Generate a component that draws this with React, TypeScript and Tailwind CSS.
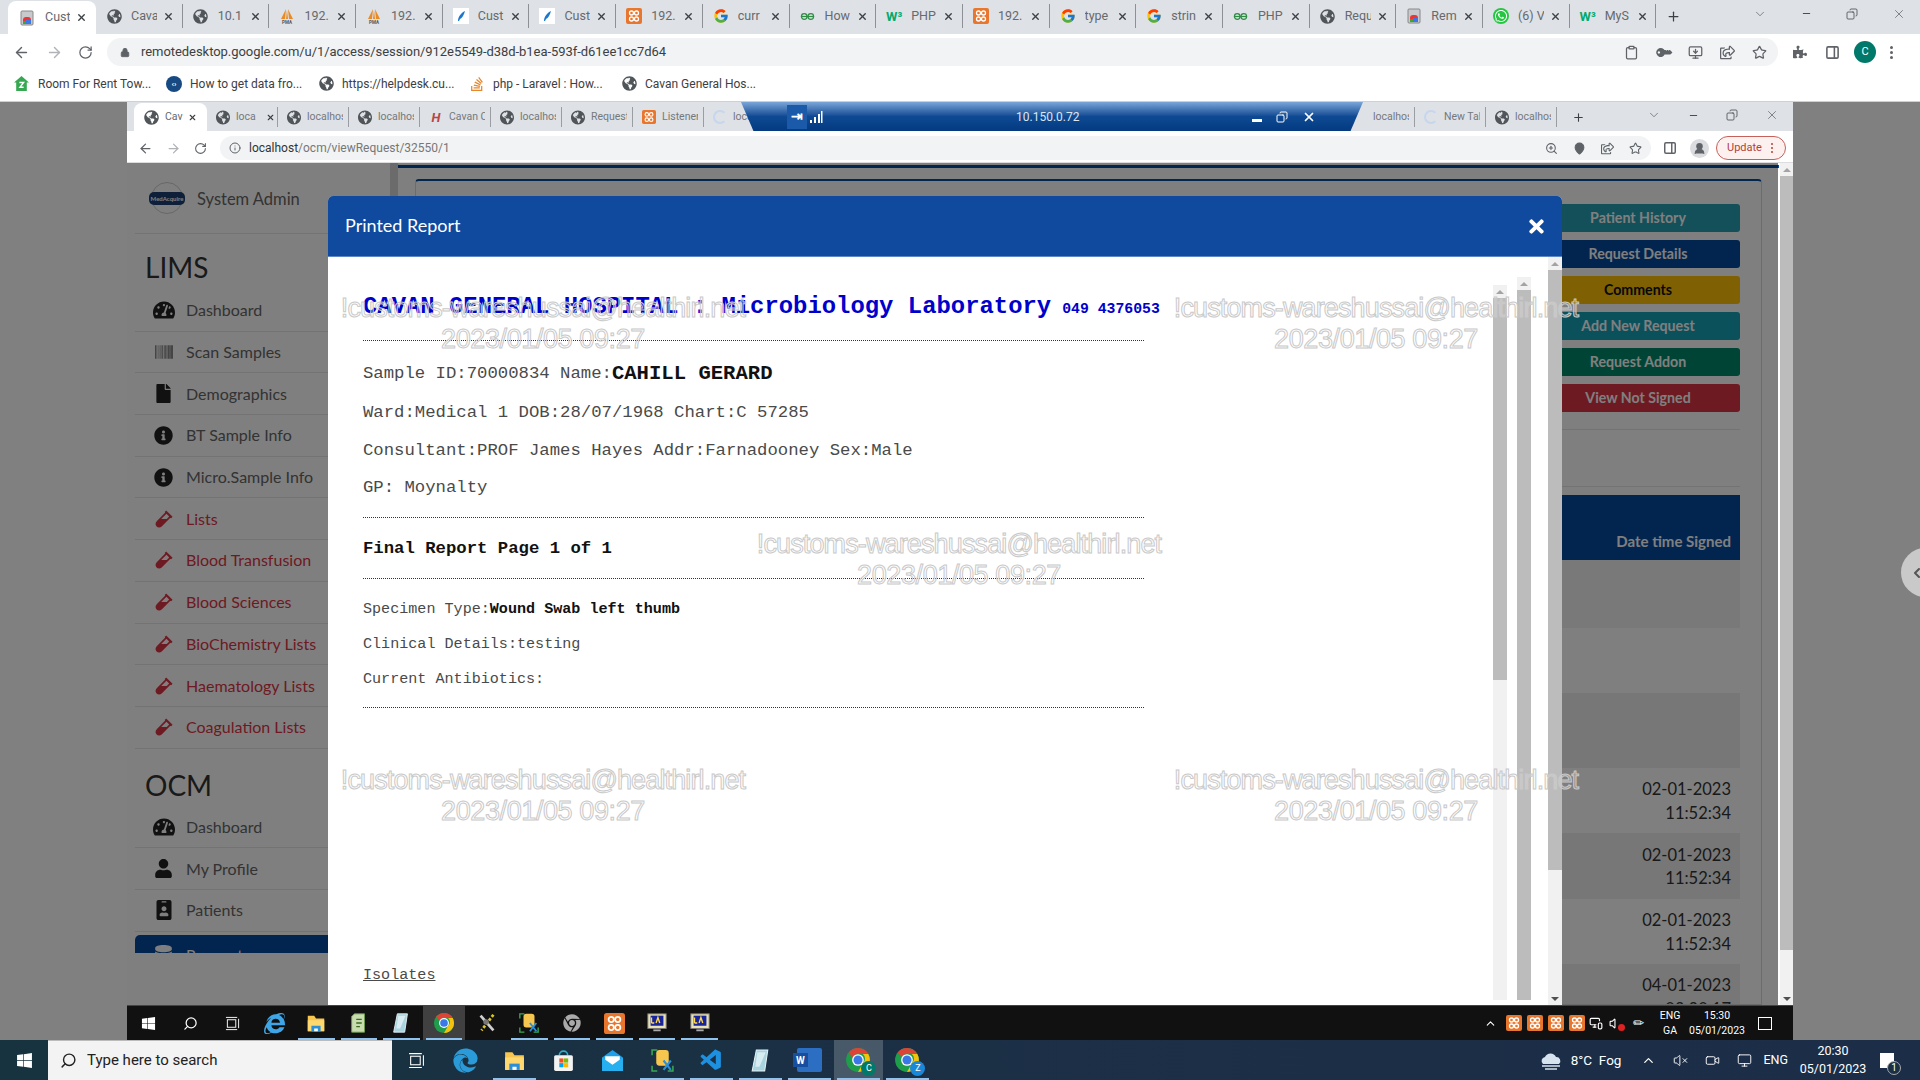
import type { ReactNode } from 'react'
import {
  FaBarcode,
  FaChrome,
  FaDatabase,
  FaEdge,
  FaFile,
  FaGlobeAmericas,
  FaIdBadge,
  FaInfoCircle,
  FaInternetExplorer,
  FaKey,
  FaPuzzlePiece,
  FaRegShareSquare,
  FaStackOverflow,
  FaTachometerAlt,
  FaTimes,
  FaUser,
  FaVial,
  FaWhatsapp,
  FaWindows,
} from 'react-icons/fa'
import { FcGoogle } from 'react-icons/fc'
import { VscVscode } from 'react-icons/vsc'
import {
  ArrowLeft,
  ArrowRight,
  ChevronDown,
  ChevronLeft,
  ChevronUp,
  Clipboard,
  Copy,
  Info,
  Lock,
  MapPin,
  Minus,
  Monitor as MonitorLine,
  MonitorDown,
  MonitorSmartphone,
  PanelRight,
  Plus,
  RotateCw,
  Search,
  Star,
  UserRound,
  Video,
  Volume,
  VolumeX,
  X,
  ZoomIn,
} from 'lucide-react'

const uiFont = "font-['Roboto',sans-serif]"
const pageFont = "font-['Lato','Noto_Sans',sans-serif]"
const monoFont = "font-['Liberation_Mono',monospace]"

function ChromeLogo({ size = 22 }: { size?: number }) {
  return (
    <svg width={size} height={size} viewBox="0 0 24 24">
      <circle cx="12" cy="12" r="11" fill="#1e9e4a" />
      <path d="M12 1a11 11 0 0 1 9.5 5.5H12a5.5 5.5 0 0 0-4.9 3L3.4 5.2A11 11 0 0 1 12 1z" fill="#db4437" />
      <path d="M21.5 6.5A11 11 0 0 1 12 23l4.7-8.2a5.5 5.5 0 0 0-.2-8.3z" fill="#f4c20d" />
      <circle cx="12" cy="12" r="5.4" fill="#fff" />
      <circle cx="12" cy="12" r="4.2" fill="#3b78e7" />
    </svg>
  )
}

function Xampp({ size = 16 }: { size?: number }) {
  return (
    <svg width={size} height={size} viewBox="0 0 16 16">
      <rect width="16" height="16" rx="2" fill="#e8762d" />
      <g fill="none" stroke="#fff" strokeWidth="1.300">
        <circle cx="5.500" cy="5" r="2" />
        <circle cx="10.500" cy="5" r="2" />
        <circle cx="5.500" cy="11" r="2" />
        <circle cx="10.500" cy="11" r="2" />
      </g>
    </svg>
  )
}

function Favicon({ kind }: { kind: string }) {
  if (kind === 'globe') return <FaGlobeAmericas className="w-[15px] h-[15px] text-[#50555a]" />
  if (kind === 'google') return <FcGoogle className="w-[16px] h-[16px]" />
  if (kind === 'xampp') return <Xampp />
  if (kind === 'wa') return <FaWhatsapp className="w-[16px] h-[16px] text-white bg-[#25c740] rounded-full p-[1px]" />
  if (kind === 'w3') return <span className="text-[13px] font-bold text-[#04aa6d] leading-none">W³</span>
  if (kind === 'gfg')
    return (
      <svg width="15" height="15" viewBox="0 0 16 16" fill="none" stroke="#2f8d46" strokeWidth="1.300">
        <circle cx="4.500" cy="8" r="3" />
        <circle cx="11.500" cy="8" r="3" />
        <path d="M1 8h14" />
      </svg>
    )
  if (kind === 'pma')
    return (
      <svg width="16" height="16" viewBox="0 0 16 16">
        <path d="M7 1 2 11h4zM9 1l5 10h-4zM8 2l-1 9h2z" fill="#e98a25" />
        <text x="8" y="15.500" fontSize="4.500" textAnchor="middle" fill="#555" fontWeight="700">PMA</text>
      </svg>
    )
  if (kind === 'feather')
    return (
      <svg width="16" height="16" viewBox="0 0 16 16">
        <rect width="16" height="16" fill="#fff" />
        <path d="M5 13c0-4 3-8 7-10-1 4-3 7-5 8l-1 2z" fill="#1976d2" />
      </svg>
    )
  if (kind === 'rd')
    return (
      <svg width="16" height="16" viewBox="0 0 16 16">
        <rect x="2" y="1" width="12" height="14" rx="1" fill="#c7c9cc" stroke="#888" />
        <rect x="4" y="7" width="8" height="7" rx="3" fill="#e33" />
        <rect x="7" y="10" width="5" height="4" fill="#3b78e7" />
        <rect x="4" y="11" width="3" height="3" fill="#3a3" />
      </svg>
    )
  if (kind === 'hf') return <span className="text-[13px] font-bold italic text-[#b44] leading-none">H</span>
  if (kind === 'spin') return <div className="w-[14px] h-[14px] rounded-full border-2 border-[#c6d6ee] border-r-transparent" />
  return null
}

function OuterTab({ kind, label }: { kind: string; label: string }) {
  return (
    <div className="w-[86.7px] h-[24px] shrink-0 flex items-center pl-[10px] border-r border-[#8d9094]">
      <div className="w-[16px] flex justify-center shrink-0"><Favicon kind={kind} /></div>
      <span className="ml-[9px] w-[26px] overflow-hidden whitespace-nowrap text-[12.500px] text-[#66696d]">{label}</span>
      <X className="ml-[6px] w-[11px] h-[11px] text-[#3c4043]" strokeWidth={3} />
    </div>
  )
}

function InnerTab({ kind, label, close }: { kind: string; label: string; close?: boolean }) {
  return (
    <div className="w-[71px] h-[20px] shrink-0 flex items-center pl-[9px] border-r border-[#9a9da1]">
      <div className="w-[14px] flex justify-center shrink-0"><Favicon kind={kind} /></div>
      <span className="ml-[6px] w-[36px] overflow-hidden whitespace-nowrap text-[10.500px] text-[#75787c]">{label}</span>
      {close && <X className="ml-[-6px] w-[9px] h-[9px] text-[#3c4043]" strokeWidth={3} />}
    </div>
  )
}

const outerTabs = [
  ['globe', 'Cava'], ['globe', '10.1'], ['pma', '192.'], ['pma', '192.'], ['feather', 'Cust'], ['feather', 'Cust'],
  ['xampp', '192.'], ['google', 'curr'], ['gfg', 'How'], ['w3', 'PHP'], ['xampp', '192.'], ['google', 'type'],
  ['google', 'strin'], ['gfg', 'PHP'], ['globe', 'Requ'], ['rd', 'Rem'], ['wa', '(6) V'], ['w3', 'MyS'],
]

const bookmarks = [
  ['Room For Rent Tow...', 'w-[153px]'],
  ['How to get data fro...', 'w-[153px]'],
  ['https://helpdesk.cu...', 'w-[150px]'],
  ['php - Laravel : How...', 'w-[153px]'],
  ['Cavan General Hos...', 'w-[150px]'],
]

function BookmarkIcon({ index }: { index: number }) {
  if (index === 0)
    return (
      <svg width="17" height="17" viewBox="0 0 16 16">
        <path d="M8 1 1 7h2v8h10V7h2z" fill="#36a852" />
        <path d="M6 7h4L6.500 11.500H10" stroke="#fff" strokeWidth="1.300" fill="none" />
      </svg>
    )
  if (index === 1)
    return <div className="w-[16px] h-[16px] rounded-full bg-[#174a82] text-white text-[8px] font-bold flex items-center justify-center">‹›</div>
  if (index === 3) return <FaStackOverflow className="w-[16px] h-[16px] text-[#e8862a]" />
  return <FaGlobeAmericas className="w-[15px] h-[15px] text-[#50555a]" />
}

function WindowButtons({ gap }: { gap: string }) {
  return (
    <div className={`flex items-center ${gap} text-[#3c4043]`}>
      <ChevronDown className="w-[14px] h-[14px]" strokeWidth={1} />
      <Minus className="w-[11px] h-[11px]" strokeWidth={2} />
      <Copy className="w-[12px] h-[12px] -scale-x-100" strokeWidth={1.500} />
      <X className="w-[14px] h-[14px]" strokeWidth={1} />
    </div>
  )
}

function OuterChrome() {
  return (
    <div className={`shrink-0 ${uiFont}`}>
      <div className="h-[34px] bg-[#dee1e6] flex items-end pl-[8px]">
        <div className="w-[88px] h-[33px] bg-white rounded-t-[8px] flex items-center pl-[11px] shrink-0">
          <Favicon kind="rd" />
          <span className="ml-[10px] w-[25px] overflow-hidden whitespace-nowrap text-[12.500px] text-[#66696d]">Cust</span>
          <X className="ml-[6px] w-[11px] h-[11px] text-[#3c4043]" strokeWidth={3} />
        </div>
        <div className="flex items-center h-[33px] pb-[3px]">
          {outerTabs.map(([kind, label], i) => (
            <OuterTab key={i} kind={kind} label={label} />
          ))}
        </div>
        <div className="h-[33px] pb-[3px] flex items-center ml-[10px]">
          <Plus className="w-[15px] h-[15px] text-[#3c4043]" strokeWidth={2} />
        </div>
        <div className="h-[33px] pb-[8px] flex items-center ml-[72px]">
          <WindowButtons gap="gap-[34px]" />
        </div>
      </div>
      <div className="h-[34px] bg-white flex items-center pl-[13px] pt-[2px]">
        <ArrowLeft className="w-[17px] h-[17px] text-[#5f6368]" />
        <ArrowRight className="ml-[16px] w-[17px] h-[17px] text-[#b0b3b7]" />
        <RotateCw className="ml-[15px] w-[15px] h-[15px] text-[#5f6368]" />
        <div className="ml-[14px] w-[1671px] h-[28px] bg-[#f1f3f4] rounded-full flex items-center pl-[13px] pr-[11px]">
          <Lock className="w-[10px] h-[11px] text-[#5f6368] fill-[#5f6368]" />
          <span className="ml-[11px] text-[13px] tracking-[-0.05px] text-[#3c4043] whitespace-nowrap">
            remotedesktop.google.com/u/1/access/session/912e5549-d38d-b1ea-593f-d61ee1cc7d64
          </span>
          <div className="ml-auto flex items-center gap-[17px] text-[#5f6368]">
            <Clipboard className="w-[15px] h-[15px]" />
            <FaKey className="w-[13px] h-[13px] rotate-[-135deg] mx-[1px]" />
            <MonitorDown className="w-[15px] h-[15px]" />
            <FaRegShareSquare className="w-[15px] h-[15px]" />
            <Star className="w-[15px] h-[15px]" />
          </div>
        </div>
        <FaPuzzlePiece className="ml-[15px] w-[14px] h-[14px] text-[#5f6368]" />
        <PanelRight className="ml-[18px] w-[15px] h-[15px] text-[#5f6368]" strokeWidth={2.500} />
        <div className="ml-[14px] w-[22px] h-[22px] rounded-full bg-[#00796b] text-white text-[11px] flex items-center justify-center">C</div>
        <div className="ml-[14px] flex flex-col gap-[2px]">
          <span className="w-[3px] h-[3px] rounded-full bg-[#5f6368]" />
          <span className="w-[3px] h-[3px] rounded-full bg-[#5f6368]" />
          <span className="w-[3px] h-[3px] rounded-full bg-[#5f6368]" />
        </div>
      </div>
      <div className="h-[34px] bg-white flex items-center pl-[13px] pb-[2px] border-b border-[#d0d0d0]">
        {bookmarks.map(([label, width], i) => (
          <div key={label} className={`${width} flex items-center gap-[8px] shrink-0`}>
            <BookmarkIcon index={i} />
            <span className="text-[12px] text-[#3c4043] whitespace-nowrap">{label}</span>
          </div>
        ))}
      </div>
    </div>
  )
}

function InnerChrome() {
  const left = [
    ['globe', 'loca', true], ['globe', 'localhost'], ['globe', 'localhost'], ['hf', 'Cavan C'], ['globe', 'localhost'],
    ['globe', 'Request'], ['xampp', 'Listener'], ['spin', 'loca'],
  ] as [string, string, boolean?][]
  return (
    <div className={`shrink-0 relative ${uiFont}`}>
      <div className="h-[29px] bg-[#dee1e6] flex items-end pl-[7px]">
        <div className="w-[73px] h-[28px] bg-white rounded-t-[8px] flex items-center pl-[10px] shrink-0">
          <Favicon kind="globe" />
          <span className="ml-[6px] w-[18px] overflow-hidden text-[10.500px] text-[#66696d]">Cav</span>
          <X className="ml-[5px] w-[9px] h-[9px] text-[#3c4043]" strokeWidth={3} />
        </div>
        <div className="h-[28px] flex items-center">
          {left.map(([kind, label, close], i) => (
            <InnerTab key={i} kind={kind} label={label} close={close} />
          ))}
        </div>
        <div className="h-[28px] ml-[569px] flex items-center">
          <InnerTab kind="" label="localhost" />
          <InnerTab kind="spin" label="New Tab" />
          <InnerTab kind="globe" label="localhost" />
        </div>
        <div className="h-[28px] flex items-center ml-[15px]">
          <Plus className="w-[13px] h-[13px] text-[#3c4043]" strokeWidth={2} />
        </div>
        <div className="h-[28px] pb-[4px] flex items-center ml-[62px]">
          <WindowButtons gap="gap-[27px]" />
        </div>
      </div>
      <div className="h-[32px] bg-white flex items-center pl-[11px] pt-[3px] border-b border-[#ddd]">
        <ArrowLeft className="w-[15px] h-[15px] text-[#5f6368]" />
        <ArrowRight className="ml-[13px] w-[15px] h-[15px] text-[#b0b3b7]" />
        <RotateCw className="ml-[13px] w-[13px] h-[13px] text-[#5f6368]" />
        <div className="ml-[13px] w-[1431px] h-[24px] bg-[#f1f3f4] rounded-full flex items-center pl-[9px] pr-[9px]">
          <Info className="w-[12px] h-[12px] text-[#5f6368]" />
          <span className="ml-[8px] text-[12px] whitespace-nowrap text-[#777]">
            <span className="text-[#333]">localhost</span>/ocm/viewRequest/32550/1
          </span>
          <div className="ml-auto flex items-center gap-[15px] text-[#5f6368]">
            <ZoomIn className="w-[13px] h-[13px]" />
            <MapPin className="w-[13px] h-[13px] fill-[#5f6368] stroke-[#5f6368]" />
            <FaRegShareSquare className="w-[13px] h-[13px]" />
            <Star className="w-[13px] h-[13px]" />
          </div>
        </div>
        <PanelRight className="ml-[12px] w-[14px] h-[14px] text-[#5f6368]" strokeWidth={2.500} />
        <div className="ml-[13px] w-[19px] h-[19px] rounded-full bg-[#dadce0] flex items-center justify-center">
          <UserRound className="w-[13px] h-[13px] text-[#5f6368] fill-[#5f6368]" />
        </div>
        <div className="ml-[7px] w-[70px] h-[24px] rounded-full border border-[#c5605a] bg-[#fdf1f0] flex items-center pl-[10px] gap-[9px]">
          <span className="text-[11px] text-[#b3403a]">Update</span>
          <div className="flex flex-col gap-[2px]">
            <span className="w-[2px] h-[2px] rounded-full bg-[#b3403a]" />
            <span className="w-[2px] h-[2px] rounded-full bg-[#b3403a]" />
            <span className="w-[2px] h-[2px] rounded-full bg-[#b3403a]" />
          </div>
        </div>
      </div>
      {/* remote desktop connection bar lies over the tab strip */}
      <div className="absolute left-[614px] top-0 w-[622px] h-[29px] bg-gradient-to-b from-[#7ba6d8] via-[#0e4a93] to-[#043a80] [clip-path:polygon(0_0,100%_0,98%_100%,2%_100%)] flex items-center">
        <div className="ml-[46px] w-[20px] h-[24px] bg-[#1b5aa8] flex items-center justify-center text-white text-[14px] font-bold">⇥</div>
        <svg className="ml-[2px]" width="14" height="14" viewBox="0 0 14 14">
          <path d="M1 10h2v3H1zM5 7h2v6H5zM9 4h2v9H9zM12 1h1.500v12H12z" fill="#fff" />
        </svg>
        <span className="ml-[193px] text-[12px] text-[#dce6f2]">10.150.0.72</span>
        <div className="ml-[173px] w-[10px] h-[3px] bg-white mt-[8px]" />
        <Copy className="ml-[14px] w-[12px] h-[12px] text-white -scale-x-100" strokeWidth={2} />
        <X className="ml-[14px] w-[14px] h-[14px] text-white" strokeWidth={3} />
      </div>
    </div>
  )
}

const limsItems = [
  ['Dashboard', 'tach', false], ['Scan Samples', 'bar', false], ['Demographics', 'file', false],
  ['BT Sample Info', 'info', false], ['Micro.Sample Info', 'info', false], ['Lists', 'vial', true],
  ['Blood Transfusion', 'vial', true], ['Blood Sciences', 'vial', true], ['BioChemistry Lists', 'vial', true],
  ['Haematology Lists', 'vial', true], ['Coagulation Lists', 'vial', true],
] as [string, string, boolean][]

const ocmItems = [['Dashboard', 'tach'], ['My Profile', 'user'], ['Patients', 'badge']]

function NavIcon({ name }: { name: string }) {
  const cls = 'w-[19px] h-[19px]'
  if (name === 'tach') return <FaTachometerAlt className="w-[22px] h-[20px]" />
  if (name === 'bar') return <FaBarcode className="w-[20px] h-[18px] text-[#555]" />
  if (name === 'file') return <FaFile className="w-[15px] h-[19px]" />
  if (name === 'info') return <FaInfoCircle className={cls} />
  if (name === 'vial') return <FaVial className="w-[18px] h-[18px] text-[#dc3545]" />
  if (name === 'user') return <FaUser className="w-[17px] h-[19px]" />
  return <FaIdBadge className="w-[22px] h-[20px]" />
}

function NavRow({ label, icon, red }: { label: string; icon: string; red?: boolean }) {
  return (
    <div className="h-[41.7px] flex items-center border-b border-[#e6e6e6] ml-[8px]">
      <div className="w-[51px] flex justify-center pl-[8px] pr-[2px] text-[#222]"><NavIcon name={icon} /></div>
      <span className={`text-[16px] ${red ? 'text-[#dc3545]' : 'text-[#666]'}`}>{label}</span>
    </div>
  )
}

function Sidebar() {
  return (
    <div className="w-[263px] h-[790px] overflow-hidden shrink-0 bg-white">
      <div className="h-[71px] flex items-center ml-[8px] border-b border-[#e6e6e6]">
        <div className="ml-[14px] w-[36px] h-[32px] relative flex items-center justify-center">
          <div className="absolute left-[2px] top-0 w-[32px] h-[32px] rounded-full border border-[#cfcfcf]" />
          <div className="relative w-[36px] h-[13px] rounded-[5px] bg-[#1c3f72] text-white text-[6px] font-bold flex items-center justify-center">MedAcquire</div>
        </div>
        <span className="ml-[12px] mt-[2px] text-[16.500px] text-[#666]">System Admin</span>
      </div>
      <div className="ml-[18px] mt-[16px] h-[34px] flex items-center text-[28px] text-[#333]">LIMS</div>
      <div className="mt-[6px]">
        {limsItems.map(([label, icon, red]) => (
          <NavRow key={label} label={label} icon={icon} red={red} />
        ))}
      </div>
      <div className="ml-[18px] mt-[16px] h-[40px] flex items-center text-[28px] text-[#333]">OCM</div>
      <div className="mt-[2px]">
        {ocmItems.map(([label, icon]) => (
          <NavRow key={label} label={label} icon={icon} />
        ))}
      </div>
      <div className="ml-[8px] mt-[3px] h-[40px] bg-[#054a9e] rounded-t-[5px] flex items-center text-white">
        <div className="w-[51px] flex justify-center pl-[8px] pr-[2px]"><FaDatabase className="w-[17px] h-[19px] text-white" /></div>
        <span className="text-[16px]">Requests</span>
      </div>
    </div>
  )
}

const actions = [
  ['Patient History', 'bg-[#28a0b2] text-white'],
  ['Request Details', 'bg-[#054a9e] text-white'],
  ['Comments', 'bg-[#ffc107] text-[#111]'],
  ['Add New Request', 'bg-[#17a2b8] text-white'],
  ['Request Addon', 'bg-[#00896a] text-white'],
  ['View Not Signed', 'bg-[#dc3545] text-white'],
]

const tableRows = [
  ['h-[68px] bg-[#f2f2f2]', ''],
  ['h-[65px] bg-white', ''],
  ['h-[75px] bg-[#eeeeee]', ''],
  ['h-[65px] bg-white', '02-01-2023'],
  ['h-[66px] bg-[#eeeeee]', '02-01-2023'],
  ['h-[65px] bg-white', '02-01-2023'],
  ['h-[65px] bg-[#eeeeee]', '04-01-2023'],
]

function MainContent() {
  return (
    <div className="flex-1 min-w-0 h-full flex flex-col bg-white pt-[2px]">
      <div className="h-[3px] bg-[#054a9e] shrink-0" />
      <div className="flex-1 min-h-0 mt-[11px] ml-[17px] mr-[17px] border border-[#d8d8d8] border-t-2 border-t-[#054a9e] rounded-t-[4px] px-[21px] pt-[23px] overflow-hidden">
        <div className="ml-auto w-[204px] flex flex-col gap-[8px]">
          {actions.map(([label, cls]) => (
            <div key={label} className={`h-[28px] pb-[1px] rounded-[3px] flex items-center justify-center text-[14.200px] font-bold ${cls}`}>
              {label}
            </div>
          ))}
        </div>
        <div className="mt-[17px] h-[58px] border-y border-[#e6e6e6]" />
        <div className="mt-[8px] h-[65px] bg-[#054a9e] flex items-end justify-end pr-[9px] pb-[8px]">
          <span className="text-[15px] font-bold text-white">Date time Signed</span>
        </div>
        {tableRows.map(([cls, date], i) => (
          <div key={i} className={`${cls} flex flex-col justify-center items-end pr-[9px] pt-[2px] text-[16.500px] leading-[23.500px] text-[#333]`}>
            {date && <span>{date}</span>}
            {date && <span>{i === 6 ? '09:20:17' : '11:52:34'}</span>}
          </div>
        ))}
      </div>
    </div>
  )
}

function Scrollbar({ className, thumb, track, bottomArrow }: { className: string; thumb: string; track: string; bottomArrow?: boolean }) {
  return (
    <div className={`flex flex-col items-center shrink-0 ${track} ${className}`}>
      <div className="h-[13px] flex items-center justify-center shrink-0">
        <div className="w-0 h-0 border-x-[4px] border-x-transparent border-b-[4px] border-b-[#a3a3a3]" />
      </div>
      <div className={`w-full bg-[#bcbcbc] shrink-0 ${thumb}`} />
      {bottomArrow && (
        <div className="mt-auto h-[13px] flex items-center justify-center shrink-0">
          <div className="w-0 h-0 border-x-[4px] border-x-transparent border-t-[4px] border-t-[#505050]" />
        </div>
      )}
    </div>
  )
}

function Dashes({ className }: { className: string }) {
  return <div className={`w-[781px] border-t border-dotted border-[#333] ${className}`} />
}

function ReportModal() {
  return (
    <div className="absolute left-[201px] top-[33px] w-[1234px] h-[809px] bg-white rounded-t-[5px] flex flex-col overflow-hidden">
      <div className="h-[61px] shrink-0 bg-[#0f4a9f] flex items-center justify-between pl-[17px] pr-[16px] border-b border-[#5d86c4]">
        <span className={`text-[18px] text-white pb-[2px] ${pageFont}`}>Printed Report</span>
        <FaTimes className="w-[19px] h-[21px] text-white" />
      </div>
      <div className="flex-1 min-h-0 flex">
        <div className={`w-[1165px] shrink-0 pl-[35px] pt-[34px] overflow-hidden text-[#4a4a4a] ${monoFont}`}>
          <div className="h-[32px] flex items-center whitespace-nowrap text-[#0000cd]">
            <span className="text-[23.900px] font-bold">CAVAN GENERAL HOSPITAL : Microbiology Laboratory</span>
            <span className="ml-[11px] mt-[4px] text-[14.800px] font-bold">049 4376053</span>
          </div>
          <Dashes className="mt-[17px]" />
          <div className="mt-[20px] h-[26px] flex items-center whitespace-nowrap text-[17.300px]">
            Sample ID:70000834 Name:<span className="text-[20.600px] font-bold text-[#111]">CAHILL GERARD</span>
          </div>
          <div className="mt-[13px] h-[26px] flex items-center text-[17.300px]">Ward:Medical 1 DOB:28/07/1968 Chart:C 57285</div>
          <div className="mt-[12px] h-[26px] flex items-center text-[17.300px]">Consultant:PROF James Hayes Addr:Farnadooney Sex:Male</div>
          <div className="mt-[11px] h-[26px] flex items-center text-[17.300px]">GP: Moynalty</div>
          <Dashes className="mt-[16px]" />
          <div className="mt-[18px] h-[26px] flex items-center text-[17.300px] font-bold text-[#111]">Final Report Page 1 of 1</div>
          <Dashes className="mt-[16px]" />
          <div className="mt-[17px] h-[26px] flex items-center text-[15.100px]">
            Specimen Type:<span className="font-bold text-[#111]">Wound Swab left thumb</span>
          </div>
          <div className="mt-[9px] h-[26px] flex items-center text-[15.100px]">Clinical Details:testing</div>
          <div className="mt-[9px] h-[26px] flex items-center text-[15.100px]">Current Antibiotics:</div>
          <Dashes className="mt-[15px]" />
          <div className="mt-[254px] h-[26px] flex items-center text-[15.100px] underline">Isolates</div>
        </div>
        <Scrollbar className="w-[14px] mt-[28px] h-[715px]" track="bg-[#f1f1f1]" thumb="h-[382px]" />
        <Scrollbar className="w-[14px] mt-[20px] h-[723px] ml-[10px]" track="bg-[#f1f1f1]" thumb="flex-1 mx-auto" />
        <div className="w-[17px] shrink-0" />
        <Scrollbar className="w-[14px] h-[748px]" track="bg-[#f1f1f1]" thumb="h-[600px]" bottomArrow />
      </div>
    </div>
  )
}

function InnerWindow() {
  return (
    <div className="flex-1 min-h-0 flex flex-col bg-white">
      <InnerChrome />
      <div className={`relative flex-1 min-h-0 flex ${pageFont}`}>
        <Sidebar />
        <div className="w-[8px] h-full shrink-0 bg-[#d6d6d6]" />
        <MainContent />
        <Scrollbar className="w-[14px] h-full border-l border-white" track="bg-[#f1f1f1]" thumb="h-[774px]" bottomArrow />
        <div className="absolute left-0 top-0 bottom-0 right-[15px] bg-black/50" />
        <ReportModal />
      </div>
    </div>
  )
}

function TaskView({ size = 16 }: { size?: number }) {
  return (
    <svg width={size} height={size} viewBox="0 0 16 16" fill="none" stroke="#fff">
      <rect x="2.500" y="4" width="9" height="8" />
      <path d="M1 1.500h12M1 14.500h12M14.500 3v10" />
    </svg>
  )
}

function Folder({ size = 22 }: { size?: number }) {
  return (
    <svg width={size} height={size} viewBox="0 0 24 24">
      <path d="M3 4h7l2 3h9v14H3z" fill="#f6c64f" />
      <path d="M3 9h18v12H3z" fill="#ffd970" />
      <rect x="7" y="15" width="10" height="6" fill="#2d8fd5" />
      <rect x="10" y="18" width="4" height="3" fill="#fff" />
    </svg>
  )
}

function Notepad({ size = 22 }: { size?: number }) {
  return (
    <svg width={size} height={size} viewBox="0 0 24 24">
      <path d="M7 2h11v20H4V5z" fill="#c7ddb0" stroke="#6f9c4a" />
      <path d="M9 8h6M9 12h6M9 16h4" stroke="#3e6a1e" strokeWidth="1.500" />
    </svg>
  )
}

function Glass({ size = 22 }: { size?: number }) {
  return (
    <svg width={size} height={size} viewBox="0 0 24 24">
      <path d="M8 2h11l-3 20H4z" fill="#a9d3df" stroke="#e6f2f5" />
      <path d="M9 4h8l-6 14H7z" fill="#d8edf2" />
    </svg>
  )
}

function Tools({ size = 22 }: { size?: number }) {
  return (
    <svg width={size} height={size} viewBox="0 0 24 24">
      <path d="M5 4l14 16" stroke="#cfcfcf" strokeWidth="3" />
      <path d="M19 3 6 20" stroke="#d9c72a" strokeWidth="3" strokeDasharray="3 2" />
      <circle cx="11" cy="11" r="3" fill="#777" />
    </svg>
  )
}

function SysTool({ size = 22 }: { size?: number }) {
  return (
    <svg width={size} height={size} viewBox="0 0 24 24">
      <rect x="6" y="2" width="12" height="15" rx="3" fill="#f6c64f" />
      <path d="M2 7V2h5M22 17v5h-5M2 17v5h5" stroke="#3aa655" strokeWidth="1.500" fill="none" />
      <path d="M13 12l7 9M20 12l-7 9" stroke="#2d8fd5" strokeWidth="2" />
    </svg>
  )
}

function Monitor({ size = 22 }: { size?: number }) {
  return (
    <svg width={size} height={size} viewBox="0 0 24 24">
      <rect x="2" y="2" width="20" height="16" fill="#e8e2b5" stroke="#777" />
      <rect x="5" y="4" width="14" height="11" fill="#17249c" />
      <path d="M6 12V6M6 12h3M11 12l2-6 2 6" stroke="#ffd84d" strokeWidth="1.500" fill="none" />
      <path d="M8 20h8" stroke="#aaa" strokeWidth="2" />
    </svg>
  )
}

function Slot({ width, children, running, active }: { width: string; children: ReactNode; running?: boolean; active?: boolean }) {
  return (
    <div className={`${width} h-full shrink-0 flex items-center justify-center relative ${active ? 'bg-white/20' : ''}`}>
      {children}
      {running && <div className="absolute bottom-0 left-[3px] right-[3px] h-[2px] bg-[#8fc3ee]" />}
    </div>
  )
}

function InnerTaskbar() {
  return (
    <div className={`h-[35px] shrink-0 bg-[#111111] border-t border-[#444] flex items-center text-white ${uiFont}`}>
      <Slot width="w-[42px]"><FaWindows className="w-[15px] h-[15px]" /></Slot>
      <Slot width="w-[42px]"><Search className="w-[15px] h-[15px] -scale-x-100" /></Slot>
      <Slot width="w-[42px]"><TaskView size={15} /></Slot>
      <Slot width="w-[42px]"><FaInternetExplorer className="w-[21px] h-[21px] text-[#3ea6e6]" /></Slot>
      <Slot width="w-[42.6px]" running><Folder /></Slot>
      <Slot width="w-[42.6px]" running><Notepad /></Slot>
      <Slot width="w-[42.6px]" running><Glass /></Slot>
      <Slot width="w-[42.6px]" running active><ChromeLogo /></Slot>
      <Slot width="w-[42.6px]"><Tools /></Slot>
      <Slot width="w-[42.6px]" running><SysTool /></Slot>
      <Slot width="w-[42.6px]" running><FaChrome className="w-[18px] h-[18px] text-[#aaa]" /></Slot>
      <Slot width="w-[42.6px]" running><Xampp size={21} /></Slot>
      <Slot width="w-[42.6px]" running><Monitor /></Slot>
      <Slot width="w-[42.6px]" running><Monitor /></Slot>
      <div className="ml-auto flex items-center h-full">
        <ChevronUp className="w-[13px] h-[13px] mr-[9px]" />
        <div className="flex items-center gap-[5px] mr-[4px]">
          <Xampp /><Xampp /><Xampp /><Xampp />
        </div>
        <MonitorSmartphone className="w-[14px] h-[14px]" />
        <div className="ml-[6px] relative">
          <Volume className="w-[13px] h-[13px]" />
          <span className="absolute right-[-3px] bottom-[-1px] w-[7px] h-[7px] rounded-full bg-[#d22]" />
        </div>
        <span className="ml-[11px] text-[13px] -rotate-45">✎</span>
        <div className="ml-[13px] w-[26px] flex flex-col items-center text-[10.500px] leading-[15px]">
          <span>ENG</span>
          <span>GA</span>
        </div>
        <div className="ml-[8px] w-[52px] flex flex-col items-center text-[10.500px] leading-[15px]">
          <span>15:30</span>
          <span>05/01/2023</span>
        </div>
        <div className="ml-[15px] mr-[21px] w-[14px] h-[13px] border border-white" />
      </div>
    </div>
  )
}

function OuterTaskbar() {
  return (
    <div className={`h-[40px] shrink-0 bg-gradient-to-r from-[#17333f] via-[#1b2f45] to-[#1c2d48] flex items-center text-white ${uiFont}`}>
      <Slot width="w-[48px]"><FaWindows className="w-[17px] h-[17px]" /></Slot>
      <div className="w-[344px] h-full bg-[#f3f3f3] flex items-center pl-[12px] shrink-0 border-t border-[#bbb]">
        <Search className="w-[17px] h-[17px] text-[#222] -scale-x-100" />
        <span className="ml-[10px] text-[15px] text-[#222]">Type here to search</span>
      </div>
      <Slot width="w-[49.1px]"><TaskView size={17} /></Slot>
      <Slot width="w-[49.1px]"><FaEdge className="w-[25px] h-[25px] text-[#2a9bd8]" /></Slot>
      <Slot width="w-[49.1px]" running><Folder size={25} /></Slot>
      <Slot width="w-[49.1px]">
        <svg width="25" height="25" viewBox="0 0 24 24">
          <path d="M8 7a4 4 0 0 1 8 0" stroke="#2fb0c9" strokeWidth="1.500" fill="none" />
          <rect x="3" y="7" width="18" height="15" rx="1.500" fill="#f3f3f3" />
          <path d="M8 10h4v4H8z" fill="#f25022" /><path d="M12.500 10h4v4h-4z" fill="#7fba00" />
          <path d="M8 14.500h4v4H8z" fill="#00a4ef" /><path d="M12.500 14.500h4v4h-4z" fill="#ffb900" />
        </svg>
      </Slot>
      <Slot width="w-[49.1px]">
        <svg width="25" height="25" viewBox="0 0 24 24">
          <path d="M2 9 12 2l10 7v13H2z" fill="#1e9fe8" />
          <path d="M5 8h14v6l-7 3-7-3z" fill="#fff" />
          <path d="M2 9l10 7 10-7v13H2z" fill="#27b0f0" />
        </svg>
      </Slot>
      <Slot width="w-[49.1px]" running><SysTool size={25} /></Slot>
      <Slot width="w-[49.1px]" running><VscVscode className="w-[25px] h-[25px] text-[#1e90e0]" /></Slot>
      <Slot width="w-[49.1px]" running><Glass size={25} /></Slot>
      <Slot width="w-[49.1px]" running>
        <div className="w-[25px] h-[24px] relative bg-[#2b6ec2] rounded-[2px]">
          <span className="absolute left-[-4px] top-[5px] w-[15px] h-[14px] bg-[#174f9e] text-white text-[10px] font-bold flex items-center justify-center">W</span>
        </div>
      </Slot>
      <Slot width="w-[49.1px]" running active>
        <div className="relative">
          <ChromeLogo size={26} />
          <span className="absolute right-[-5px] bottom-[-3px] w-[15px] h-[15px] rounded-full bg-[#00796b] text-[9px] flex items-center justify-center">C</span>
        </div>
      </Slot>
      <Slot width="w-[49.1px]" running>
        <div className="relative">
          <ChromeLogo size={26} />
          <span className="absolute right-[-5px] bottom-[-3px] w-[15px] h-[15px] rounded-full bg-[#1a88d8] text-[9px] flex items-center justify-center">Z</span>
        </div>
      </Slot>
      <div className="ml-auto flex items-center h-full text-[13.500px]">
        <svg width="24" height="24" viewBox="0 0 24 24">
          <path d="M4 16a4 4 0 0 1 2-7 6 6 0 0 1 11 0 4 4 0 0 1 3 7z" fill="#d6e2ee" />
          <path d="M3 18h18M6 21h12" stroke="#d6e2ee" strokeWidth="1.500" />
        </svg>
        <span className="ml-[8px] whitespace-nowrap">8°C&nbsp; Fog</span>
        <ChevronUp className="ml-[20px] w-[15px] h-[15px]" />
        <VolumeX className="ml-[17px] w-[15px] h-[15px]" strokeWidth={1.500} />
        <Video className="ml-[17px] w-[15px] h-[15px]" strokeWidth={1.500} />
        <MonitorLine className="ml-[17px] w-[15px] h-[15px]" strokeWidth={1.500} />
        <span className="ml-[11px] text-[12.500px]">ENG</span>
        <div className="ml-[15px] w-[60px] flex flex-col items-center text-[12.500px] leading-[18px]">
          <span>20:30</span>
          <span>05/01/2023</span>
        </div>
        <div className="ml-[17px] mr-[26px] relative w-[14px] h-[15px] bg-white">
          <span className="absolute right-[-7px] bottom-[-7px] w-[14px] h-[14px] rounded-full bg-[#1b2f45] border border-[#aaa] text-[10px] flex items-center justify-center">1</span>
        </div>
      </div>
    </div>
  )
}

const watermarks = [
  'left-[341px] top-[293px]',
  'left-[1174px] top-[293px]',
  'left-[757px] top-[529px]',
  'left-[341px] top-[765px]',
  'left-[1174px] top-[765px]',
]

function Watermark({ place }: { place: string }) {
  const stroke = "font-['Liberation_Sans',sans-serif] text-[27px] leading-[31px] text-white/20 [-webkit-text-stroke:1px_#c9c9c9]"
  return (
    <div className={`absolute ${place} w-[404px] flex flex-col items-center pointer-events-none whitespace-nowrap ${stroke}`}>
      <span className="tracking-[-0.870px]">!customs-wareshussai@healthirl.net</span>
      <span className="tracking-[-0.400px]">2023/01/05 09:27</span>
    </div>
  )
}

export default function App() {
  return (
    <div className="relative w-[1920px] h-[1080px] overflow-hidden flex flex-col bg-[#808080]">
      <OuterChrome />
      <div className="flex-1 min-h-0 flex flex-col px-[127px]">
        <InnerWindow />
        <InnerTaskbar />
      </div>
      <OuterTaskbar />
      {watermarks.map((place) => (
        <Watermark key={place} place={place} />
      ))}
      {/* side panel handle of the remote desktop page */}
      <div className="absolute left-[1901px] top-[548px] w-[49px] h-[49px] rounded-full bg-[#c9c9c9] flex items-center pl-[8px]">
        <ChevronLeft className="w-[16px] h-[16px] text-[#555]" strokeWidth={3} />
      </div>
    </div>
  )
}
